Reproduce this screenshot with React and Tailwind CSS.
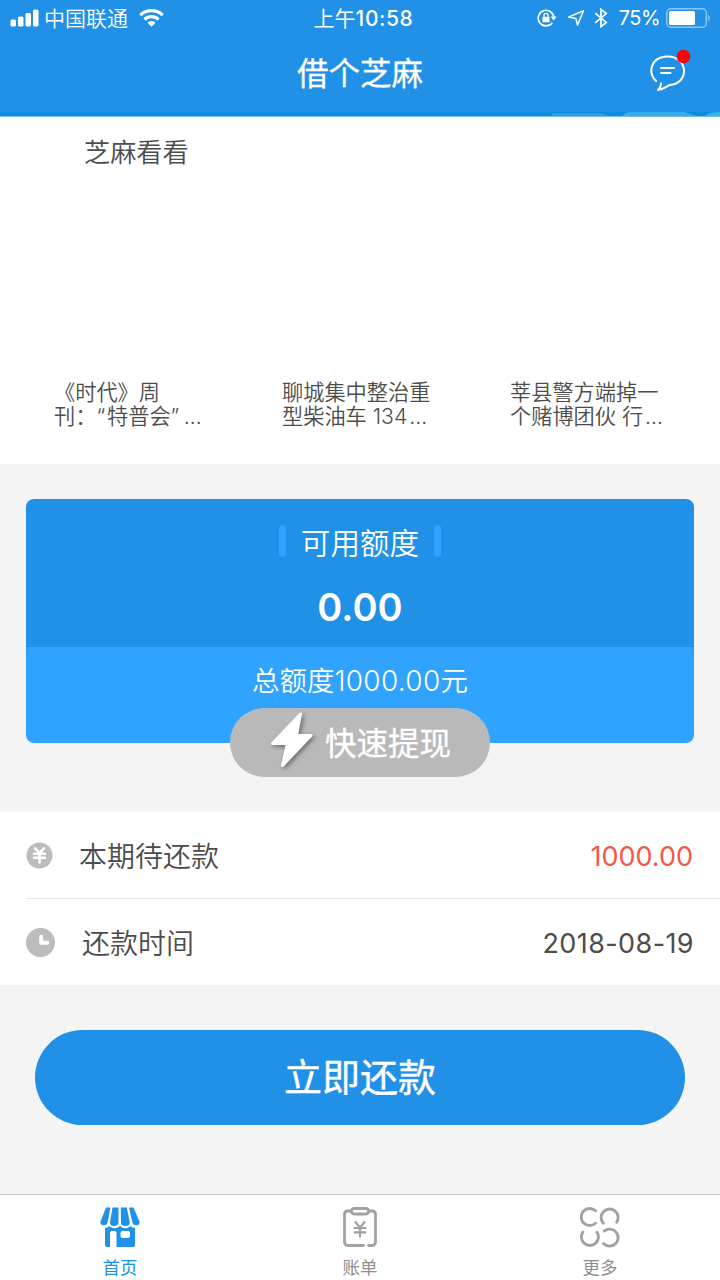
const news = [
  { id: 1, first: "《时代》周", second: <>刊：<span className="tracking-[2px]">“</span>特普会<span className="tracking-[2.5px]">”</span></> },
  { id: 2, first: "聊城集中整治重", second: "型柴油车 134" },
  { id: 3, first: "莘县警方端掉一", second: "个赌博团伙 行" },
];

function StatusBar() {
  return (
    <div className="grid grid-cols-3 h-9 items-center text-[21px] leading-[35px]">
      <div className="flex items-center pl-[10px]">
        <svg className="w-[29px] h-[18px]" viewBox="0 0 29 18" fill="currentColor">
          <rect x="0.5" y="10.5" width="5.5" height="7" rx="1.5" />
          <rect x="8" y="7.5" width="5.5" height="10" rx="1.5" />
          <rect x="15.5" y="4" width="5.5" height="13.5" rx="1.5" />
          <rect x="23" y="0.5" width="5.5" height="17" rx="1.5" />
        </svg>
        <span className="ml-[5px] pt-px font-[350]">中国联通</span>
        <svg className="ml-[11px] w-[25px] h-[18px]" viewBox="0 0 25 18" fill="none" stroke="currentColor" strokeWidth="3.2">
          <path d="M1.3 6.2a16 16 0 0 1 22.4 0" />
          <path d="M5.5 10.5a10 10 0 0 1 14 0" />
          <path d="M12.5 17.8l-4-4a5.6 5.6 0 0 1 8 0z" fill="currentColor" stroke="none" />
        </svg>
      </div>
      <div className="pt-px pl-[7px] text-center whitespace-nowrap text-[21px]">上午<span className="font-medium tracking-[0.6px]">10:58</span></div>
      <div className="flex items-center justify-end pr-[9px]">
        <svg className="w-5 h-[18px]" viewBox="0 0 20 18" fill="none" stroke="currentColor" strokeWidth="1.6">
          <path d="M15.3 13.7a7.8 7.8 0 1 1 1.5-4.7" />
          <path d="M13.7 7.5h6l-3 4z" fill="currentColor" stroke="none" />
          <rect x="5.4" y="7.8" width="7.2" height="5.4" rx="0.6" fill="currentColor" stroke="none" />
          <path d="M7 8V6.3a2 2 0 0 1 4 0V8" strokeWidth="1.3" />
        </svg>
        <svg className="ml-[10px] w-[18px] h-[18px]" viewBox="0 0 18 18" fill="none" stroke="currentColor" strokeWidth="1.5" strokeLinejoin="round">
          <path d="M16.500 1.800L10.500 16L8.900 9.600L1.500 8.100z" />
        </svg>
        <svg className="ml-[9px] w-[14px] h-5" viewBox="0 0 14 20" fill="none" stroke="currentColor" strokeWidth="1.7">
          <path d="M1.2 5.2l11 9.2L7 18.6V1.4l5.2 4.2-11 9.2" />
        </svg>
        <span className="ml-[11px] pt-px text-[20px] tracking-[-0.55px]">75%</span>
        <svg className="ml-[6px] w-[45px] h-[20px]" viewBox="0 0 45 20">
          <rect x="0.8" y="0.8" width="39.5" height="18.4" rx="4" fill="none" stroke="#8cc5f3" strokeWidth="1.5" />
          <rect x="3" y="3" width="26" height="14" rx="1.5" fill="white" />
          <path d="M42.200 6q3.200 4 0 8z" fill="#8cc5f3" />
        </svg>
      </div>
    </div>
  );
}

function Header() {
  return (
    <header className="bg-[#2190e7] text-white h-[117px] flex flex-col">
      <StatusBar />
      <div className="flex-1 grid grid-cols-[1fr_auto_1fr] items-center">
        <h1 className="col-start-2 text-[31.5px] font-normal leading-none [-webkit-text-stroke:0.3px_white]">借个芝麻</h1>
        <svg className="justify-self-end mr-[29px] -mt-[9px] w-[42px] h-[44px]" viewBox="0 0 42 44" fill="none" stroke="currentColor" strokeWidth="2" strokeLinecap="round" strokeLinejoin="round">
          <path d="M7 33C-1 25 1 10 17 8.500C27 7.500 35 14 35 23C35 31 29 36.500 21 37C17 38.500 14 41.500 9 42C11 40 12.300 38 12 35.500" />
          <path d="M12 20h13M12 25h9.500" />
          <circle cx="34.500" cy="8.500" r="6.800" fill="#fe0000" stroke="none" />
        </svg>
      </div>
      {/* Top edge of the banner */}
      <svg className="w-full h-[5px] shrink-0" viewBox="0 0 720 5">
        <rect width="720" height="5" fill="#098edf" />
        <path d="M552 5V1h48l12 4z" fill="#369ce0" />
        <path d="M622 5q2-5 10-5h52l16 5z" fill="#35adeb" />
        <path d="M704 5q4-5 16-5v5z" fill="#35b5ee" />
        <rect y="4" width="720" height="1" fill="#7abdeb" />
      </svg>
    </header>
  );
}

function News() {
  return (
    <section className="bg-white h-[347px] text-[#4c4c4c] font-[350]">
      <h2 className="pt-[18px] pl-[84px] text-[26.200px] leading-9">芝麻看看</h2>
      <ul className="grid grid-cols-[228px_228px_1fr] mt-[209px] pl-[54px] text-[21.2px] leading-6 whitespace-nowrap">
        {news.map(({ id, first, second }) => (
          <li key={id}>
            <p>{first}</p>
            <p>{second}<span className="ml-[2px]">…</span></p>
          </li>
        ))}
      </ul>
    </section>
  );
}

function QuotaCard() {
  return (
    <section className="relative mx-[26px] mt-[35px] h-[244px] text-white text-center">
      <div className="h-[148px] bg-[#2190e7] rounded-t-lg pt-[24px]">
        <div className="flex justify-center items-center gap-[15px] h-[36px]">
          <i className="w-[7px] h-8 rounded-full bg-[#30a3ff]" />
          <span className="pt-[3px] text-[29.600px] leading-9 font-[350]">可用额度</span>
          <i className="w-[7px] h-8 rounded-full bg-[#30a3ff]" />
        </div>
        <div className="mt-[24px] text-[38px] leading-[48px] font-semibold tracking-[0.1px]">0.00</div>
      </div>
      <div className="h-[96px] bg-[#30a3ff] rounded-b-lg pt-[16px] text-[27.500px] leading-9 font-[350]">
        总额度<span className="text-[28px] tracking-[0.3px]">1000.00</span>元
      </div>
      <button className="absolute left-[204px] top-[209px] w-[260px] h-[69px] rounded-full bg-[#b9b9b9] flex items-center pl-[38px]">
        <svg className="w-[54px] h-[64px] drop-shadow-[2px_2px_2px_rgba(0,0,0,0.4)]" viewBox="0 0 54 64" fill="white" stroke="white" strokeWidth="3" strokeLinejoin="round">
          <path d="M32.500 3L4.500 32.500H19.500L14.500 54.500L43 24.500H28.500z" />
        </svg>
        <span className="ml-[3px] pt-[2px] text-[31.500px] leading-none font-normal [-webkit-text-stroke:0.3px_white]">快速提现</span>
      </button>
    </section>
  );
}

function Bills() {
  return (
    <section className="mt-[69px] bg-white text-[#4c4c4c] text-[28px] font-[350]">
      <div className="ml-[26px] pr-[27px] h-[87px] border-b border-[#e8e8e8] flex items-center">
        <svg className="w-[27px] h-[27px]" viewBox="0 0 27 27" fill="none">
          <circle cx="13.500" cy="13.500" r="13" fill="#bcbcbc" />
          <path d="M9 6.300l4.500 4.500 4.500-4.500M8 11.800h11M8 15.800h11M13.500 11v9.500" stroke="white" strokeWidth="2.600" strokeLinecap="round" />
        </svg>
        <span className="ml-[26px] pt-[3px]">本期待还款</span>
        <span className="ml-auto pt-[4px] text-[27px] font-normal text-[#f2574b]">1000.00</span>
      </div>
      <div className="ml-[26px] pr-[26px] h-[86px] flex items-center">
        <svg className="w-[29px] h-[29px]" viewBox="0 0 29 29" fill="none">
          <circle cx="14.500" cy="14.500" r="14.500" fill="#bcbcbc" />
          <path d="M15.200 8.800v6h6" stroke="white" strokeWidth="4" strokeLinecap="round" strokeLinejoin="round" />
        </svg>
        <span className="ml-[27px] pt-[3px]">还款时间</span>
        <span className="ml-auto pt-[4px] text-[27px] font-normal tracking-[0.4px]">2018-08-19</span>
      </div>
    </section>
  );
}

function TabBar() {
  return (
    <nav className="mt-auto h-[86px] border-t border-[#c8c8c8] bg-white grid grid-cols-3 text-[17.500px] leading-6 text-[#8f8f8f]">
      <a className="flex flex-col items-center pt-[11px] text-[#2190e7]">
        <svg className="w-10 h-[42px]" viewBox="0 0 40 42" fill="currentColor">
          <path d="M6 1.500h4.500L7.500 17Q6.500 19.500 3.500 19.300Q0 19 0.500 15.500Z" />
          <path d="M12.500 1.500h6v15.500Q18 20 14.300 20Q10 20 10 16.500Z" />
          <path d="M20.800 1.500h6L29.800 16.500Q29.800 20 25.500 20Q21.300 20 21 17Z" />
          <path d="M29 1.500h4.500L39.500 15.500Q40 19 36.500 19.300Q33.500 19.500 32.500 17Z" />
          <path fillRule="evenodd" d="M5 22q3 0 4.500-2 5 4.500 10.500 0 5.500 4.500 10.500 0Q32 22 35 22v17q0 2-2 2H16.500V27q0-2-2-2h-2.500q-2 0-2 2v14H7q-2 0-2-2zM22.500 25q-2 0-2 2v3q0 2 2 2h5.500q2 0 2-2v-3q0-2-2-2z" />
        </svg>
        <span className="mt-[8px]">首页</span>
      </a>
      <a className="flex flex-col items-center pt-[11px]">
        <svg className="w-10 h-[42px]" viewBox="0 0 40 42" fill="none" stroke="#a2a2a2" strokeWidth="2.800" strokeLinecap="round" strokeLinejoin="round">
          <path d="M11 5H8q-3.500 0-3.500 3.500v27Q4.500 39.500 8 39.500h15.500M28.500 39.500h3.500q3.500 0 3.500-4v-27Q35.500 5 32 5h-3" />
          <rect x="11.500" y="2.500" width="17" height="5.500" rx="2.700" />
          <path d="M15.500 16l4.500 5.500 4.500-5.500M14.500 22h11M14.500 26.300h11M20 22v8.500" strokeWidth="2.200" />
        </svg>
        <span className="mt-[8px]">账单</span>
      </a>
      <a className="flex flex-col items-center pt-[11px]">
        <svg className="w-10 h-[42px]" viewBox="0 0 40 42" fill="none" stroke="#a2a2a2" strokeWidth="2.900" strokeLinecap="round">
          <path d="M15.500 4.800A8.500 8.500 0 1 0 15.500 17.200" />
          <path d="M23.300 17.200A8.500 8.500 0 1 1 36.700 16.200" />
          <path d="M2.800 26.300A8.500 8.500 0 1 0 17 26.300" />
          <path d="M24.300 25A8.500 8.500 0 1 1 23.500 37.500" />
        </svg>
        <span className="mt-[8px]">更多</span>
      </a>
    </nav>
  );
}

export default function App() {
  return (
    <div className="w-[720px] h-[1280px] flex flex-col overflow-hidden bg-[#f4f4f4] font-['Inter','Noto_Sans_CJK_SC',sans-serif]">
      <Header />
      <News />
      <QuotaCard />
      <Bills />
      <button className="mx-[35px] mt-[45px] h-[95px] shrink-0 rounded-full bg-[#2190e7] text-white text-[38px] font-normal [-webkit-text-stroke:0.4px_white]">立即还款</button>
      <TabBar />
    </div>
  );
}
